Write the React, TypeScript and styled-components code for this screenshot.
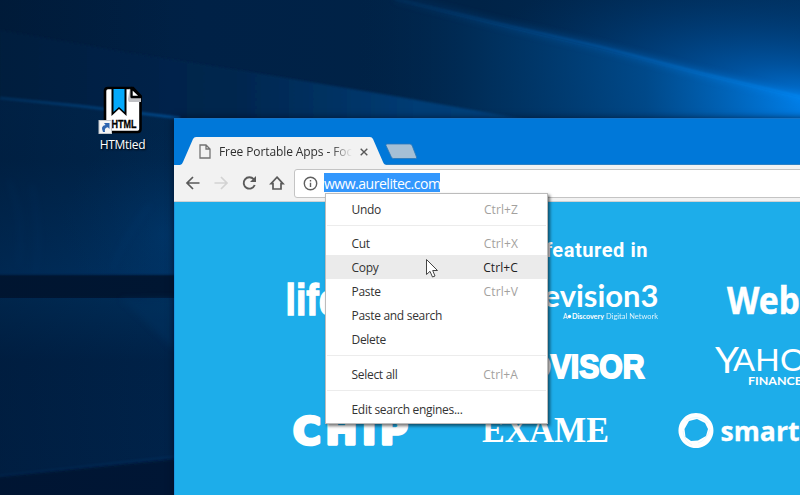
import React from 'react';
import styled, { createGlobalStyle } from 'styled-components';

const GlobalStyle = createGlobalStyle`
  * { box-sizing: border-box; }
  body { margin: 0; overflow: hidden; font-family: "Open Sans", "Noto Sans", sans-serif; }
`;

const Desktop = styled.main`
  position: relative;
  width: 800px;
  height: 495px;
  overflow: hidden;
  background: #001f42;
`;

const WallpaperArt = styled.svg`
  position: absolute;
  inset: 0;
  display: block;
`;

const Shortcut = styled.div`
  position: absolute;
  left: 86px;
  top: 85px;
  width: 73px;
  display: flex;
  flex-direction: column;
  align-items: center;
`;

const ShortcutArt = styled.svg`
  display: block;
  overflow: visible;
`;

const ShortcutLabel = styled.span`
  margin-top: 1px;
  color: #fff;
  font-size: 12px;
  line-height: 18px;
  letter-spacing: -0.3px;
  text-shadow: 1px 1px 2px #000;
`;

const BrowserWindow = styled.section`
  position: absolute;
  left: 174px;
  top: 118px;
  width: 700px;
  height: 400px;
  display: flex;
  flex-direction: column;
  background: #1dadea;
  border-top: 1px solid #1674c8;
  box-shadow: 0 0 7px rgba(0, 8, 24, 0.65);
`;

const TitleBar = styled.header`
  height: 46px;
  flex: none;
  padding: 18px 0 0 6px;
  display: flex;
  align-items: flex-start;
  background: #0078d9;
`;

const Tab = styled.div`
  position: relative;
  width: 207px;
  height: 28px;
  flex: none;
  display: flex;
  align-items: center;
  padding: 1px 17px 0 19px;
`;

const TabShape = styled.svg`
  position: absolute;
  left: 0;
  top: 0;
  overflow: visible;
`;

const TabIcon = styled.svg`
  position: relative;
  flex: none;
`;

const TabTitle = styled.span`
  position: relative;
  width: 133px;
  margin-left: 8px;
  overflow: hidden;
  white-space: nowrap;
  color: #2f2f2f;
  font-size: 12px;
  line-height: 18px;
  letter-spacing: -0.1px;
  mask-image: linear-gradient(90deg, #000 112px, transparent 133px);
`;

const TabClose = styled.svg`
  position: relative;
  flex: none;
  margin-left: 8px;
`;

const NewTab = styled.svg`
  margin: 6px 0 0 -2px;
  overflow: visible;
`;

const Toolbar = styled.nav`
  height: 37px;
  flex: none;
  display: flex;
  align-items: center;
  padding-left: 11px;
  background: #f2f2f2;
  border-bottom: 1px solid #cfd2d4;
`;

const NavIcon = styled.svg`
  width: 16px;
  height: 16px;
  margin-right: 12px;
  flex: none;
`;

const AddressBar = styled.div`
  flex: 1;
  height: 29px;
  margin-left: -3px;
  display: flex;
  align-items: center;
  padding-left: 8px;
  background: #fff;
  border: 1px solid #c4c4c4;
  border-radius: 3px;
`;

const SelectedUrl = styled.span`
  width: 116px;
  height: 19px;
  margin: -2px 0 0 6px;
  background: #3297fd;
  color: #fff;
  font-size: 14px;
  line-height: 21px;
  letter-spacing: -0.48px;
  white-space: nowrap;
`;

const Page = styled.div`
  flex: 1;
  padding: 34px 0 0 80px;
  background: #1dadea;
  border-left: 1px solid #1c96e0;
`;

const Heading = styled.h2`
  margin: 0;
  width: 393px;
  height: 32px;
  text-align: right;
  color: #fff;
  font: 700 20px/28px Roboto, sans-serif;
  letter-spacing: 0.55px;
`;

const LogoGrid = styled.div`
  display: grid;
  grid-template-columns: repeat(3, 195px);
  grid-auto-rows: 65px;
  margin-left: -1px;
`;

const Logo = styled.svg`
  width: 195px;
  height: 65px;
  overflow: visible;
  fill: #fff;
`;

const Menu = styled.ul`
  position: absolute;
  left: 325px;
  top: 193px;
  width: 223px;
  height: 231px;
  margin: 0;
  padding: 3px 0 0;
  list-style: none;
  background: #fff;
  border: 1px solid #bcbcbc;
  box-shadow: 2px 2px 3px rgba(0, 0, 0, 0.55);
`;

const MenuItem = styled.li<{ $active?: boolean }>`
  height: 24px;
  display: flex;
  align-items: center;
  justify-content: space-between;
  padding: 2px 29px 0 25.5px;
  background: ${(p) => (p.$active ? '#ebebeb' : 'transparent')};
  color: #333;
  font-size: 12px;
  line-height: 22px;
  letter-spacing: -0.3px;
`;

const Keys = styled.span<{ $active?: boolean }>`
  letter-spacing: 0.1px;
  color: ${(p) => (p.$active ? '#222' : '#a3a19e')};
`;

const Divider = styled.li<{ $size: number }>`
  height: ${(p) => p.$size}px;
  padding-top: 4px;
  &::before {
    content: '';
    display: block;
    height: 1px;
    margin: 0 1px;
    background: #ececec;
  }
`;

const Cursor = styled.svg`
  position: absolute;
  left: 425px;
  top: 258px;
`;

type Entry = { label: string; keys?: string; active?: boolean } | { gap: number };

const entries: Entry[] = [
  { label: 'Undo', keys: 'Ctrl+Z' },
  { gap: 10 },
  { label: 'Cut', keys: 'Ctrl+X' },
  { label: 'Copy', keys: 'Ctrl+C', active: true },
  { label: 'Paste', keys: 'Ctrl+V' },
  { label: 'Paste and search' },
  { label: 'Delete' },
  { gap: 11 },
  { label: 'Select all', keys: 'Ctrl+A' },
  { gap: 11 },
  { label: 'Edit search engines...' },
];

function Wallpaper() {
  return (
    <WallpaperArt width="800" height="495" viewBox="0 0 800 495">
      <defs>
        <linearGradient id="base" x1="0" x2="800" y1="0" y2="0" gradientUnits="userSpaceOnUse">
          <stop offset="0" stopColor="#001e3e" />
          <stop offset="0.25" stopColor="#002146" />
          <stop offset="0.6" stopColor="#002347" />
          <stop offset="1" stopColor="#00305f" />
        </linearGradient>
        <radialGradient id="glow" cx="0" cy="0" r="1" gradientUnits="userSpaceOnUse" gradientTransform="translate(815 102) rotate(10) scale(330 115)">
          <stop offset="0" stopColor="#0078e0" />
          <stop offset="0.3" stopColor="#0060b8" stopOpacity="0.7" />
          <stop offset="1" stopColor="#003a74" stopOpacity="0" />
        </radialGradient>
        <linearGradient id="under" x1="360" x2="800" y1="0" y2="0" gradientUnits="userSpaceOnUse">
          <stop offset="0" stopColor="#00264c" stopOpacity="0" />
          <stop offset="0.3" stopColor="#003362" />
          <stop offset="0.65" stopColor="#004c8e" />
          <stop offset="1" stopColor="#0080ea" />
        </linearGradient>
        <linearGradient id="beam" x1="400" x2="800" y1="0" y2="0" gradientUnits="userSpaceOnUse">
          <stop offset="0" stopColor="#004580" stopOpacity="0.3" />
          <stop offset="0.5" stopColor="#0055a0" />
          <stop offset="1" stopColor="#0088f4" />
        </linearGradient>
        <linearGradient id="wedge" x1="0" x2="520" y1="0" y2="0" gradientUnits="userSpaceOnUse">
          <stop offset="0" stopColor="#002044" />
          <stop offset="0.45" stopColor="#00264e" />
          <stop offset="0.8" stopColor="#003c74" />
          <stop offset="1" stopColor="#004480" />
        </linearGradient>
        <linearGradient id="left" x1="0" x2="0" y1="97" y2="276" gradientUnits="userSpaceOnUse">
          <stop offset="0" stopColor="#00264d" />
          <stop offset="0.35" stopColor="#00254b" />
          <stop offset="1" stopColor="#003161" />
        </linearGradient>
        <linearGradient id="lower" x1="0" x2="0" y1="297" y2="480" gradientUnits="userSpaceOnUse">
          <stop offset="0" stopColor="#002d58" />
          <stop offset="0.35" stopColor="#002248" />
          <stop offset="1" stopColor="#00234a" />
        </linearGradient>
        <linearGradient id="shade" x1="0" x2="174" y1="0" y2="0" gradientUnits="userSpaceOnUse">
          <stop offset="0" stopColor="#00132d" stopOpacity="0.3" />
          <stop offset="1" stopColor="#00132d" stopOpacity="0" />
        </linearGradient>
        <radialGradient id="haze" cx="165" cy="235" r="105" gradientUnits="userSpaceOnUse">
          <stop offset="0" stopColor="#003a70" stopOpacity="0.55" />
          <stop offset="1" stopColor="#003060" stopOpacity="0" />
        </radialGradient>
        <linearGradient id="ray" x1="0" x2="180" y1="0" y2="0" gradientUnits="userSpaceOnUse">
          <stop offset="0" stopColor="#003b70" />
          <stop offset="1" stopColor="#004d92" />
        </linearGradient>
        <filter id="soft" x="-10%" y="-30%" width="120%" height="160%"><feGaussianBlur stdDeviation="1.3" /></filter>
        <filter id="softer" x="-10%" y="-30%" width="120%" height="160%"><feGaussianBlur stdDeviation="3" /></filter>
      </defs>
      <rect width="800" height="495" fill="url(#base)" />
      <rect x="450" width="350" height="120" fill="url(#glow)" />
      <path d="M395 0L500 25L600 49L700 74L800 98V125H360V0Z" fill="url(#under)" opacity="0.8" />
      <path d="M395 -2L500 24L600 47L700 73L805 98" fill="none" stroke="url(#beam)" strokeWidth="7" opacity="0.55" filter="url(#softer)" />
      <path d="M395 -1L500 24L600 47L700 73L805 98" fill="none" stroke="url(#beam)" strokeWidth="2.5" opacity="0.75" filter="url(#soft)" />
      <path d="M0 30L130 53L250 72L400 97L530 120H0Z" fill="url(#wedge)" filter="url(#soft)" />
      <path d="M-5 98L80 106L180 119V276H-5Z" fill="url(#left)" />
      <path d="M0 98L80 106L180 118" fill="none" stroke="url(#ray)" strokeWidth="2.5" filter="url(#soft)" />
      <rect y="120" width="174" height="156" fill="url(#haze)" />
      <path d="M18 265Q25 220 9 180M112 270Q125 235 150 205M35 275Q42 237 32 185" fill="none" stroke="#004783" strokeWidth="3" opacity="0.2" filter="url(#softer)" />
      <rect x="-10" y="275" width="190" height="23" fill="#001632" filter="url(#soft)" />
      <rect y="298" width="180" height="197" fill="url(#lower)" />
      <path d="M120 299Q145 320 174 350V298Z" fill="#003565" opacity="0.4" filter="url(#softer)" />
      <path d="M-10 477L180 456" fill="none" stroke="#00386e" strokeWidth="2" opacity="0.35" filter="url(#soft)" />
      <path d="M-15 479L190 458V510H-15Z" fill="#001735" filter="url(#soft)" />
      <rect width="174" height="495" fill="url(#shade)" />
    </WallpaperArt>
  );
}

function DesktopShortcut() {
  return (
    <Shortcut>
      <ShortcutArt width="48" height="50" viewBox="99 85 48 50">
        <path d="M108 88H133L140.500 96V129Q140.500 132 137.500 132H108Q105 132 105 129V91Q105 88 108 88Z" fill="#fff" stroke="#000" strokeWidth="2.6" />
        <path d="M130 88V98H141V102H129Q128 101 128 99Z" fill="#bfc0c4" />
        <path d="M131.500 88V97H141Z" fill="#fff" stroke="#000" strokeWidth="2.400" strokeLinejoin="round" />
        <path d="M111.500 88H126.500V116L119 109L111.500 116Z" fill="#000" />
        <path d="M113.500 89H124.500V112L119 107L113.500 112Z" fill="#04a9fb" />
        <text x="111.500" y="128" fontFamily="Liberation Sans" fontWeight="700" fontSize="11.500" textLength="25" lengthAdjust="spacingAndGlyphs" stroke="#000" strokeWidth="0.3">HTML</text>
        <rect x="99" y="120.500" width="12.500" height="13" fill="#f5f5f5" stroke="#c4c8cc" />
        <path d="M103 132Q100 126 105.500 125L104 123H109.500V129L107.800 127.200Q104 128 105 132Z" fill="#2f66b0" />
      </ShortcutArt>
      <ShortcutLabel>HTMtied</ShortcutLabel>
    </Shortcut>
  );
}

function Tabs() {
  return (
    <TitleBar>
      <Tab>
        <TabShape width="207" height="28" viewBox="0 0 207 28">
          <path d="M-6 28H0Q2 28 3 25L13 2Q14 0 16 0H190Q192 0 193 2L203 25Q204 28 207 28V29H-6Z" fill="#f2f2f2" />
          <path d="M206 27.500H620" stroke="#2d82c6" />
        </TabShape>
        <TabIcon width="12" height="15" viewBox="0 0 12 15" fill="none" stroke="#737373" strokeWidth="1.300">
          <path d="M1 1H7L11 5V14H1ZM7 1V5H11" />
        </TabIcon>
        <TabTitle>Free Portable Apps - Focus</TabTitle>
        <TabClose width="8" height="8" viewBox="0 0 8 8" stroke="#585858" strokeWidth="1.400">
          <path d="M.7 .7L7.300 7.300M7.300 .7L.7 7.300" />
        </TabClose>
      </Tab>
      <NewTab width="33" height="17" viewBox="0 0 33 17">
        <path d="M2 1H25Q26.500 1 27.300 3L31.500 14Q32 15.500 30.500 15.500H8.500Q7 15.500 6.300 14L1 2.500Q.5 1 2 1Z" fill="#a5bfd5" stroke="#2b77b8" strokeWidth="0.8" />
      </NewTab>
    </TitleBar>
  );
}

function BrowserToolbar() {
  return (
    <Toolbar>
      <NavIcon viewBox="0 0 16 16" fill="none" stroke="#5a5a5a" strokeWidth="1.700"><path d="M14.500 8H2M8 2L2 8L8 14" /></NavIcon>
      <NavIcon viewBox="0 0 16 16" fill="none" stroke="#d3d3d3" strokeWidth="1.700"><path d="M1.500 8H14M8 2L14 8L8 14" /></NavIcon>
      <NavIcon viewBox="0 0 16 16" fill="none" stroke="#5a5a5a" strokeWidth="1.900">
        <path d="M12.700 4.200A5.700 5.700 0 1 0 13.700 10" />
        <path d="M15 1V7H9Z" fill="#5a5a5a" stroke="none" />
      </NavIcon>
      <NavIcon viewBox="0 0 16 16" fill="none" stroke="#5a5a5a" strokeWidth="1.700"><path d="M8 2.200L14 8.700H12V14H4V8.700H2Z" /></NavIcon>
      <AddressBar>
        <svg width="15" height="15" viewBox="0 0 15 15" fill="none" stroke="#5f5f5f" strokeWidth="1.400">
          <circle cx="7.500" cy="7.500" r="6.200" /><path d="M7.500 6.800V11M7.500 4V5.400" />
        </svg>
        <SelectedUrl>www.aurelitec.com</SelectedUrl>
      </AddressBar>
    </Toolbar>
  );
}

/* Each logo's viewBox uses the desktop coordinates of its grid cell. */
function Logos() {
  return (
    <LogoGrid>
      <Logo viewBox="254 268 195 65">
        <text x="285.500" y="315" fontFamily="Liberation Sans Narrow, Liberation Sans" fontWeight="700" fontSize="45" textLength="54" lengthAdjust="spacingAndGlyphs" stroke="#fff" strokeWidth="1.400">life</text>
      </Logo>
      <Logo viewBox="449 268 195 65">
        <text x="543.500" y="307" fontFamily="Lato" fontWeight="700" fontSize="30" textLength="115" lengthAdjust="spacingAndGlyphs">evision3</text>
        <text x="563" y="319" fontFamily="Lato" fontSize="6.800">A</text>
        <circle cx="569.500" cy="316.500" r="1.700" />
        <text x="572" y="319" fontFamily="Lato" fontWeight="700" fontSize="7" textLength="32" lengthAdjust="spacingAndGlyphs">Discovery</text>
        <text x="606" y="319" fontFamily="Lato" fontSize="7" textLength="52" lengthAdjust="spacingAndGlyphs" opacity="0.85">Digital Network</text>
      </Logo>
      <Logo viewBox="644 268 195 65">
        <text x="727" y="313.500" fontFamily="Noto Sans" fontWeight="700" fontSize="38" textLength="73" lengthAdjust="spacingAndGlyphs" stroke="#fff" strokeWidth="0.500">Web</text>
      </Logo>
      <Logo viewBox="254 333 195 65" />
      <Logo viewBox="449 333 195 65">
        <text x="529" y="377.500" fontFamily="Liberation Sans" fontWeight="700" fontSize="32.500" textLength="115.500" lengthAdjust="spacingAndGlyphs" stroke="#fff" strokeWidth="1.900">DVISOR</text>
      </Logo>
      <Logo viewBox="644 333 195 65">
        <text x="715" y="373" fontFamily="Lato" fontSize="37" textLength="24" lengthAdjust="spacingAndGlyphs">Y</text>
        <text x="733" y="371" fontFamily="Lato" fontSize="31" textLength="73" lengthAdjust="spacingAndGlyphs">AHO</text>
        <text x="748" y="385" fontFamily="Lato" fontWeight="700" fontSize="11.500" textLength="54" lengthAdjust="spacingAndGlyphs">FINANCE</text>
      </Logo>
      <Logo viewBox="254 398 195 65">
        <text x="293 325.500 362 380" y="444" fontFamily="DejaVu Sans" fontWeight="700" fontSize="38" stroke="#fff" strokeWidth="3.400" strokeLinejoin="round">CHIP</text>
      </Logo>
      <Logo viewBox="449 398 195 65">
        <text x="482" y="442" fontFamily="Liberation Serif" fontWeight="700" fontSize="36.500" textLength="127" lengthAdjust="spacingAndGlyphs">EXAME</text>
      </Logo>
      <Logo viewBox="644 398 195 65">
        <path fillRule="evenodd" d="M696 413A17.500 17.500 0 1 1 695.900 413ZM697 419L689 421L684.500 429L685.500 437L691 441L698 440.500L706 436L708 429L705 423Z" />
        <path d="M686 421Q697 413 708 423M683 431Q684 441 692 445M698 443Q707 440 710 429" fill="none" stroke="#d2effb" strokeWidth="0.5" />
        <text x="720.500" y="441" fontFamily="Open Sans" fontWeight="700" fontSize="27" textLength="79" lengthAdjust="spacingAndGlyphs" stroke="#fff" strokeWidth="0.3">smart</text>
      </Logo>
    </LogoGrid>
  );
}

function ContextMenu() {
  return (
    <Menu>
      {entries.map((e, i) =>
        'gap' in e ? (
          <Divider key={i} $size={e.gap} />
        ) : (
          <MenuItem key={i} $active={e.active}>
            {e.label}
            {e.keys && <Keys $active={e.active}>{e.keys}</Keys>}
          </MenuItem>
        ),
      )}
    </Menu>
  );
}

export default function App() {
  return (
    <Desktop>
      <GlobalStyle />
      <Wallpaper />
      <DesktopShortcut />
      <BrowserWindow>
        <Tabs />
        <BrowserToolbar />
        <Page>
          <Heading>featured in</Heading>
          <Logos />
        </Page>
      </BrowserWindow>
      <ContextMenu />
      <Cursor width="15" height="21" viewBox="0 0 15 21">
        <path d="M1.500 1.500V16.500L5 13.300L7.500 19L10 18L7.700 12.500H12.500Z" fill="#fff" stroke="#444" strokeWidth="1" />
      </Cursor>
    </Desktop>
  );
}
